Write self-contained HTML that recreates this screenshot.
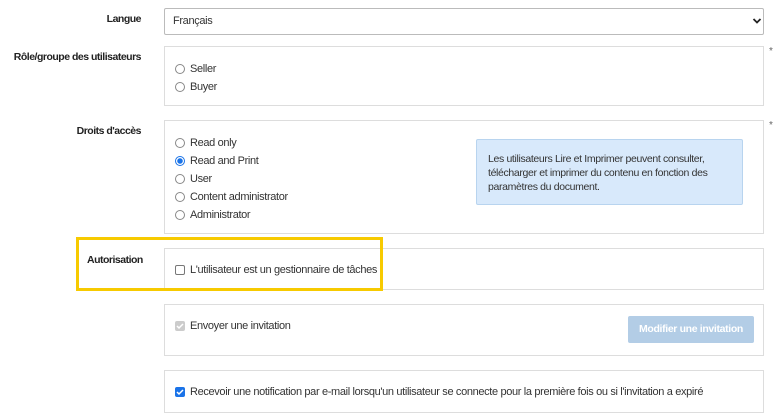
<!DOCTYPE html>
<html><head><meta charset="utf-8"><style>
body{margin:0;width:777px;height:417px;background:#fff;position:relative;overflow:hidden;font-family:"Liberation Sans",Arial,sans-serif;font-size:11px;color:#333;letter-spacing:-0.35px}
.a{position:absolute}
.lbl{position:absolute;right:636px;font-weight:bold;font-size:10.5px;color:#222;white-space:nowrap;letter-spacing:-0.5px}
.box{position:absolute;left:164px;width:600px;border:1px solid #ddd;background:#fff;box-sizing:border-box}
.r{position:absolute;width:8px;height:8px;border:1px solid #888;border-radius:50%;background:#fff}
.r.on{border-color:#1a73e8;background:radial-gradient(circle,#1a73e8 0 2.5px,#fff 3px)}
.t{position:absolute;white-space:nowrap;line-height:12px}
.star{position:absolute;left:769px;color:#666;font-size:10px}
</style></head><body>
<div class="lbl" style="top:13px">Langue</div>
<div class="box" style="top:8px;height:27px;border-color:#bbb;border-radius:2px"></div>
<div class="t" style="left:173px;top:15px">Français</div>
<svg class="a" style="left:752px;top:17px" width="10" height="8"><path d="M1.5 2l3.5 3.5 3.5-3.5" fill="none" stroke="#222" stroke-width="1.8"/></svg>

<div class="lbl" style="top:51px">Rôle/groupe des utilisateurs</div>
<div class="box" style="top:46px;height:60px"></div>
<div class="star" style="top:46px">*</div>
<div class="r" style="left:175px;top:64px"></div><div class="t" style="left:190px;top:63px">Seller</div>
<div class="r" style="left:175px;top:82px"></div><div class="t" style="left:190px;top:81px">Buyer</div>

<div class="lbl" style="top:125px">Droits d'accès</div>
<div class="box" style="top:120px;height:114px"></div>
<div class="star" style="top:120px">*</div>
<div class="r" style="left:175px;top:138px"></div><div class="t" style="left:190px;top:137px">Read only</div>
<div class="r on" style="left:175px;top:156px"></div><div class="t" style="left:190px;top:155px">Read and Print</div>
<div class="r" style="left:175px;top:174px"></div><div class="t" style="left:190px;top:173px">User</div>
<div class="r" style="left:175px;top:192px"></div><div class="t" style="left:190px;top:191px">Content administrator</div>
<div class="r" style="left:175px;top:210px"></div><div class="t" style="left:190px;top:209px">Administrator</div>
<div class="a" style="left:476px;top:139px;width:267px;height:66px;background:#d8e9fb;border:1px solid #b8d4ef;box-sizing:border-box;border-radius:2px"></div>
<div class="t" style="left:488px;top:152px;line-height:14px;font-size:10.5px">Les utilisateurs Lire et Imprimer peuvent consulter,<br>télécharger et imprimer du contenu en fonction des<br>paramètres du document.</div>

<div class="box" style="top:248px;height:42px"></div>
<div class="a" style="left:76px;top:237px;width:307px;height:54px;border:3px solid #f7ca00;box-sizing:border-box"></div>
<div class="lbl" style="top:254px;left:87px;right:auto">Autorisation</div>
<div class="a" style="left:175px;top:265px;width:8px;height:8px;border:1px solid #777;border-radius:2px"></div>
<div class="t" style="left:190px;top:264px">L'utilisateur est un gestionnaire de tâches</div>

<div class="box" style="top:304px;height:52px"></div>
<div class="a" style="left:175px;top:321px;width:10px;height:10px;background:#ccc;border-radius:2px"></div>
<svg class="a" style="left:175px;top:321px" width="10" height="10"><path d="M2 5l2 2 4-4" fill="none" stroke="#fff" stroke-width="1.5"/></svg>
<div class="t" style="left:190px;top:320px">Envoyer une invitation</div>
<div class="a" style="left:628px;top:316px;width:126px;height:27px;background:#b3cde6;border-radius:2px;color:#fff;font-weight:bold;text-align:center;line-height:27px;font-size:10.5px">Modifier une invitation</div>

<div class="box" style="top:370px;height:43px"></div>
<div class="a" style="left:175px;top:387px;width:10px;height:10px;background:#1a73e8;border-radius:2px"></div>
<svg class="a" style="left:175px;top:387px" width="10" height="10"><path d="M2 5l2 2 4-4" fill="none" stroke="#fff" stroke-width="1.5"/></svg>
<div class="t" style="left:190px;top:386px">Recevoir une notification par e-mail lorsqu'un utilisateur se connecte pour la première fois ou si l'invitation a expiré</div>
</body></html>
